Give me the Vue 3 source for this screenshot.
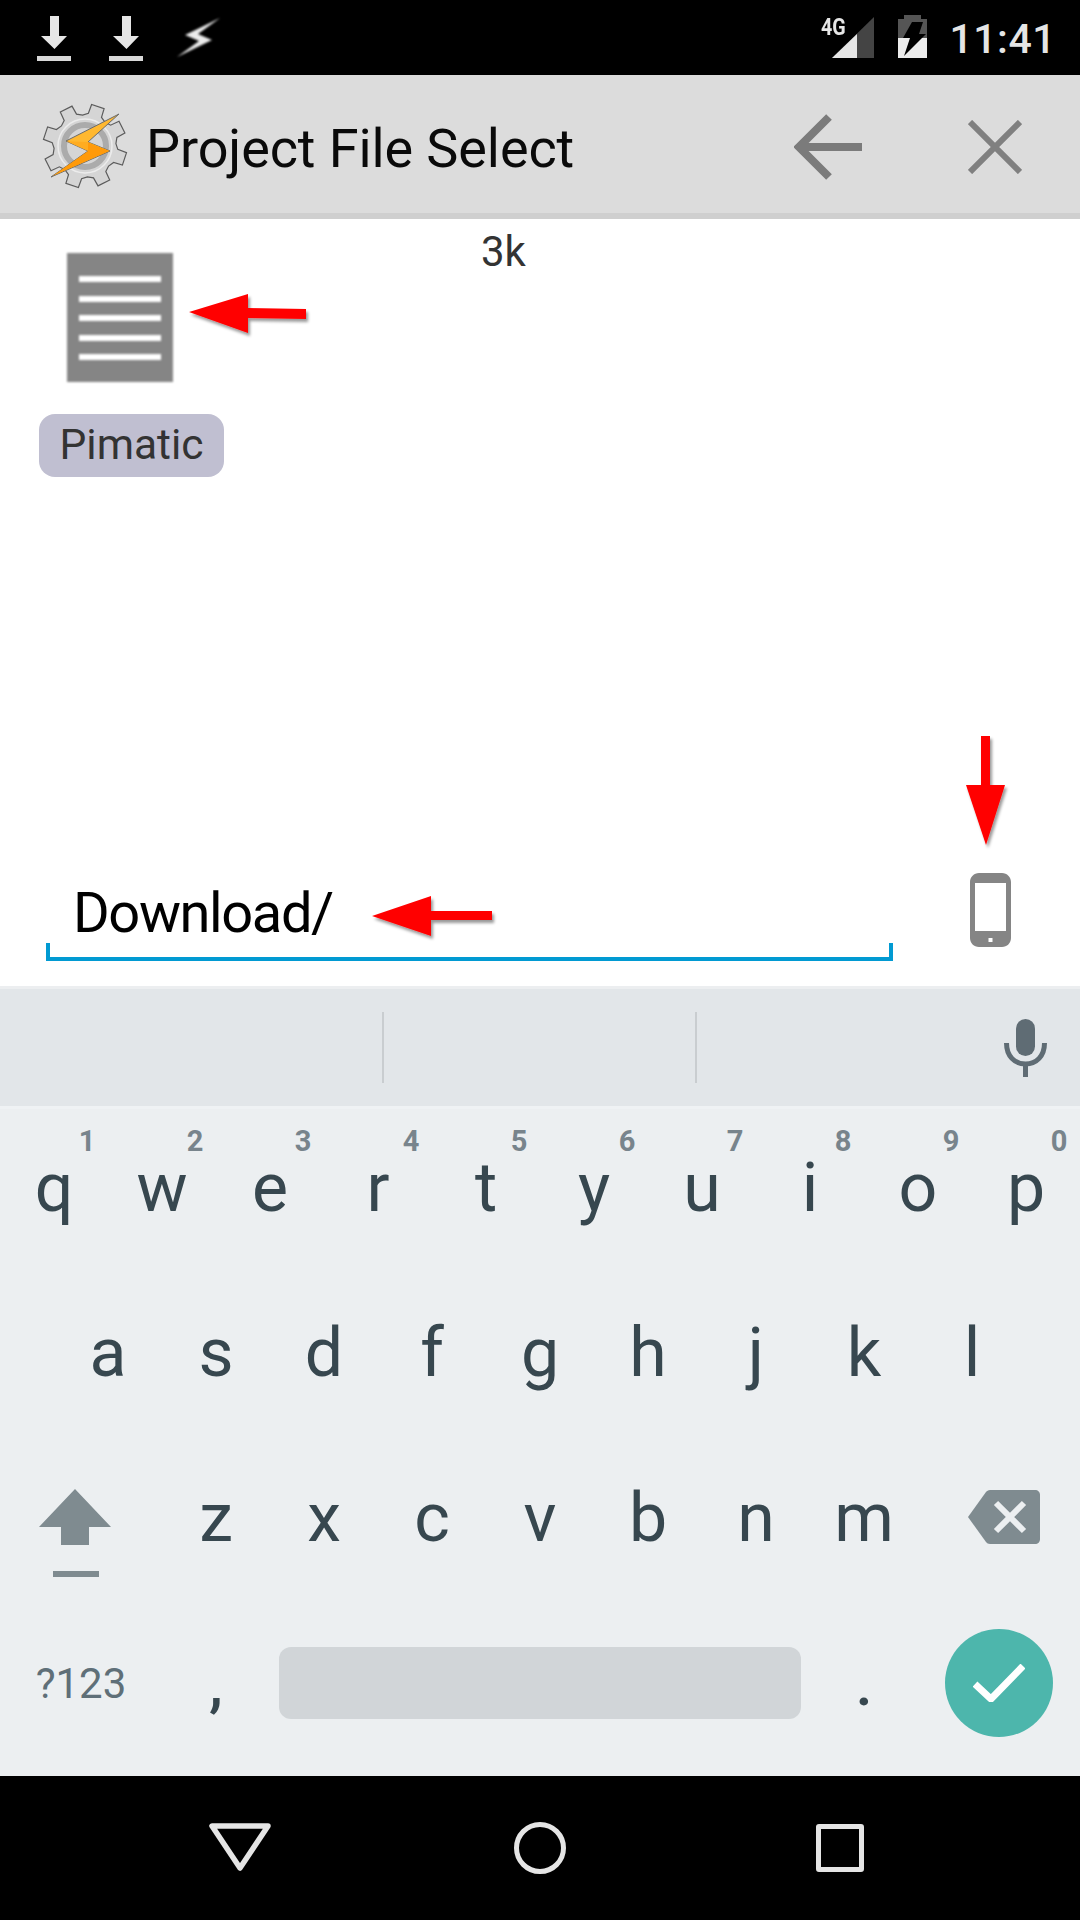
<template>
  <div class="screen">
    <!-- Status bar -->
    <div class="status-bar">
      <div class="status-left">
        <svg class="status-dl" viewBox="0 0 34 46">
          <path d="M13 0h9v20h8L17.500 33 4 20h9z" fill="#e6e6e6" />
          <rect x="0" y="40" width="34" height="5" fill="#d8d8d8" />
        </svg>
        <svg class="status-dl" viewBox="0 0 34 46">
          <path d="M13 0h9v20h8L17.500 33 4 20h9z" fill="#e6e6e6" />
          <rect x="0" y="40" width="34" height="5" fill="#d8d8d8" />
        </svg>
        <svg class="status-bolt" viewBox="0 0 44 40">
          <path d="M43 0 8 17l14 6L0 39l35-17-14-6z" fill="#ececec" />
        </svg>
      </div>
      <div class="status-right">
        <div class="signal">
          <svg class="signal-icon" viewBox="0 0 42 41">
            <path d="M42 0v41H0z" fill="#444" />
            <path d="M25 17v24H0z" fill="#e6e6e6" />
          </svg>
          <span class="signal-type">4G</span>
        </div>
        <svg class="battery" viewBox="0 0 29 43">
          <path d="M6 0h17v4h6v19H0V4h6z" fill="#555" />
          <rect x="0" y="23" width="29" height="20" fill="#ececec" />
          <path d="M14 7h11l-4 12h7L6 41l6-18H5z" fill="#000" />
        </svg>
        <span class="clock">11:41</span>
      </div>
    </div>

    <!-- Action bar -->
    <div class="action-bar">
      <svg class="app-logo" viewBox="0 0 86 86">
        <path :d="gearPath" fill="#d5d5d5" stroke="#5c5c5c" stroke-width="1.200" />
        <circle cx="43" cy="43" r="27" fill="none" stroke="#ececec" stroke-width="1.500" />
        <circle cx="43" cy="43" r="21" fill="none" stroke="#ababab" stroke-width="6" />
        <path d="M77 11 24 38l22 10L9 74l59-26-22-9z" fill="#ffb830" stroke="#6b6b6b" stroke-width="1" stroke-linejoin="round" />
        <path d="M24.500 38.200 46 39l21.500 9H46z" fill="#ffac20" />
        <path d="M46 39.500 67.500 48 10.500 73 46 48z" fill="#ff9a0a" />
      </svg>
      <span class="action-title">Project File Select</span>
      <svg class="action-back" viewBox="0 0 68 66">
        <path d="M68 33H8M35 3 5 33l30 30" fill="none" stroke="#7b7b7b" stroke-width="8" />
      </svg>
      <svg class="action-close" viewBox="0 0 54 54">
        <path d="M2 2l50 50M52 2 2 52" fill="none" stroke="#808080" stroke-width="6" />
      </svg>
    </div>

    <!-- File browser -->
    <div class="browser">
      <div class="file-row">
        <div class="file-item">
          <div class="file-icon">
            <span v-for="n in 5" :key="n" class="file-line"></span>
          </div>
          <span class="file-name">Pimatic</span>
        </div>
        <span class="file-size">3k</span>
      </div>

      <div class="path-row">
        <div class="path-input">Download/</div>
        <svg class="phone-icon" viewBox="0 0 41 74">
          <path
            fill-rule="evenodd"
            d="M9 0h23c5 0 9 4 9 9v56c0 5-4 9-9 9H9c-5 0-9-4-9-9V9c0-5 4-9 9-9zM5 10v48h31V10z"
            fill="#858585"
          />
          <rect x="18.500" y="65" width="4" height="4" fill="#fff" />
        </svg>
      </div>
    </div>

    <!-- Keyboard -->
    <div class="keyboard">
      <div class="suggestions">
        <span class="sugg-cell"></span>
        <span class="sugg-cell"></span>
        <span class="sugg-cell last">
          <svg class="mic-icon" viewBox="0 0 43 58">
            <rect x="12" y="0" width="19" height="37" rx="9.500" fill="#5f6c74" />
            <path d="M2.500 24c0 13 8 21 19 21s19-8 19-21" fill="none" stroke="#5f6c74" stroke-width="5" />
            <rect x="19" y="44" width="5" height="14" fill="#5f6c74" />
          </svg>
        </span>
      </div>
      <div class="keys">
        <div v-for="(row, i) in letterRows" :key="i" class="key-row">
          <div v-for="k in row" :key="k.c" class="key">
            {{ k.c }}
            <span v-if="k.hint" class="key-hint">{{ k.hint }}</span>
          </div>
        </div>
        <div class="key-row">
          <div class="key wide">
            <svg class="key-art" viewBox="0 0 162 165">
              <path d="M75 53l36 38H89v18H61V91H39z" fill="#7f8b90" />
              <rect x="53" y="135" width="46" height="6" fill="#7f8b90" />
            </svg>
          </div>
          <div v-for="c in 'zxcvbnm'" :key="c" class="key">{{ c }}</div>
          <div class="key wide">
            <svg class="key-art" viewBox="0 0 162 165">
              <path d="M72 54h45c3 0 5 2 5 5v44c0 3-2 5-5 5H72c-2 0-3-1-4-2L50 81l18-25c1-1 2-2 4-2z" fill="#7f8b90" />
              <path d="M78 67l28 28M106 67 78 95" stroke="#eceff1" stroke-width="6" fill="none" />
            </svg>
          </div>
        </div>
        <div class="key-row">
          <div class="key wide symbols">?123</div>
          <div class="key punct">,</div>
          <div class="key space-key"><span class="space-bar"></span></div>
          <div class="key punct">.</div>
          <div class="key wide">
            <span class="enter-btn">
              <svg class="check" viewBox="0 0 52 38">
                <path d="M2 20l16 15L50 2" fill="none" stroke="#fff" stroke-width="7" />
              </svg>
            </span>
          </div>
        </div>
      </div>
    </div>

    <!-- Nav bar -->
    <div class="nav-bar">
      <svg class="nav-back" viewBox="0 0 62 48">
        <path d="M3 3h56L31 45z" fill="none" stroke="#e5e5e5" stroke-width="5.500" stroke-linejoin="round" />
      </svg>
      <span class="nav-home"></span>
      <span class="nav-recent"></span>
    </div>

    <!-- Red arrows added on top of the screenshot -->
    <svg class="annot" viewBox="0 0 1080 1920">
      <g fill="#f00" filter="url(#arrow-shadow)">
        <path d="M189 312l59-18v14l58 1v10l-58-1v15z" />
        <path d="M372 916l59-20v15h61v9h-61v16z" />
        <path d="M981 736h9v49h15l-19 60-20-60h15z" />
      </g>
      <defs>
        <filter id="arrow-shadow" x="-20%" y="-20%" width="140%" height="140%">
          <feDropShadow dx="2" dy="3" stdDeviation="1.500" flood-color="#000" flood-opacity="0.400" />
        </filter>
      </defs>
    </svg>
  </div>
</template>

<script setup>
import { computed } from 'vue'

const toKeys = (letters, hints = '') =>
  letters.split('').map((c, i) => ({ c, hint: hints[i] }))

const letterRows = [
  toKeys('qwertyuiop', '1234567890'),
  toKeys('asdfghjkl')
]

// 8 tooth gear for the app logo
const gearPath = computed(() => {
  const pts = []
  const cx = 43
  const cy = 43
  for (let i = 0; i < 8; i++) {
    const base = (i * 45 + 18) * Math.PI / 180
    const step = Math.PI / 180
    const ring = [
      [31, -22.5],
      [33, -12],
      [42, -9],
      [42, 9],
      [33, 12]
    ]
    ring.forEach(([r, a]) => {
      const t = base + a * step
      pts.push(`${(cx + r * Math.cos(t)).toFixed(1)} ${(cy + r * Math.sin(t)).toFixed(1)}`)
    })
  }
  return 'M' + pts.join('L') + 'z'
})
</script>

<style scoped>
.screen {
  position: relative;
  width: 1080px;
  height: 1920px;
  display: flex;
  flex-direction: column;
  overflow: hidden;
  background: #fff;
  font-family: Roboto, "Liberation Sans", sans-serif;
}

/* Status bar */
.status-bar {
  height: 75px;
  background: #000;
  display: flex;
  justify-content: space-between;
  flex-shrink: 0;
}

.status-left {
  display: flex;
  padding: 16px 0 0 37px;
  align-items: flex-start;
}

.status-dl {
  width: 34px;
  height: 46px;
  margin-right: 38px;
}

.status-bolt {
  width: 44px;
  height: 40px;
  margin: 2px 0 0 -4px;
  filter: blur(1.2px);
}

.status-right {
  display: flex;
  align-items: flex-start;
  padding-right: 24px;
}

.signal {
  position: relative;
  width: 53px;
  height: 58px;
  margin-right: 24px;
}

.signal-icon {
  position: absolute;
  left: 11px;
  top: 17px;
  width: 42px;
  height: 41px;
}

.signal-type {
  position: absolute;
  left: 0;
  top: 13px;
  font-size: 24px;
  line-height: 28px;
  font-weight: 700;
  color: #e6e6e6;
  transform: scaleX(0.82);
  transform-origin: left center;
}

.battery {
  width: 29px;
  height: 43px;
  margin-top: 15px;
  margin-right: 22px;
}

.clock {
  font-size: 41px;
  line-height: 48px;
  margin-top: 15px;
  font-weight: 500;
  letter-spacing: 0.5px;
  color: #e5e5e5;
}

/* Action bar */
.action-bar {
  height: 138px;
  box-sizing: content-box;
  background: #dcdcdc;
  border-bottom: 6px solid #cfcfcf;
  display: flex;
  align-items: center;
  flex-shrink: 0;
}

.app-logo {
  width: 86px;
  height: 86px;
  margin-left: 42px;
  margin-top: 4px;
  flex-shrink: 0;
}

.action-title {
  margin-left: 18px;
  font-size: 54px;
  line-height: 70px;
  padding-top: 10px;
  color: #0a0a0a;
  width: 648px;
  letter-spacing: -0.1px;
}

.action-back {
  width: 68px;
  height: 66px;
  margin-top: 5px;
}

.action-close {
  width: 54px;
  height: 54px;
  margin-left: 106px;
  margin-top: 5px;
}

/* File browser */
.browser {
  flex: 1;
  display: flex;
  flex-direction: column;
  justify-content: space-between;
  background: #fff;
}

.file-row {
  display: flex;
  align-items: flex-start;
  padding: 0 0 0 39px;
}

.file-item {
  display: flex;
  flex-direction: column;
  align-items: flex-start;
  width: 443px;
  padding-top: 34px;
}

.file-icon {
  width: 106px;
  height: 129px;
  margin-left: 28px;
  padding: 23px 12px 0;
  box-sizing: border-box;
  background: #858585;
  display: flex;
  flex-direction: column;
  gap: 13.5px;
  filter: blur(1px);
}

.file-line {
  height: 6px;
  background: #fff;
}

.file-name {
  margin-top: 32px;
  width: 185px;
  height: 63px;
  box-sizing: border-box;
  border-radius: 16px;
  background: #c0bfd1;
  color: #333;
  font-size: 42.5px;
  line-height: 62px;
  text-align: center;
}

.file-size {
  font-size: 42px;
  line-height: 48px;
  margin-top: 9px;
  margin-left: -1px;
  color: #333;
}

.path-row {
  display: flex;
  align-items: flex-start;
  padding: 0 0 25px 46px;
}

.path-input {
  width: 847px;
  height: 88px;
  box-sizing: border-box;
  padding-left: 27px;
  font-size: 56px;
  letter-spacing: -1.4px;
  line-height: 80px;
  color: #000;
  border-bottom: 4px solid #019ad2;
  position: relative;
}

.path-input::before,
.path-input::after {
  content: '';
  position: absolute;
  bottom: 0;
  width: 4px;
  height: 14px;
  background: #019ad2;
}

.path-input::before {
  left: 0;
}

.path-input::after {
  right: 0;
}

.phone-icon {
  width: 41px;
  height: 74px;
  margin-left: 77px;
  filter: blur(0.7px);
}

/* Keyboard */
.keyboard {
  flex-shrink: 0;
  background: #eceff1;
  border-top: 3px solid #eceef0;
}

.suggestions {
  height: 117px;
  background: #e2e6e9;
  display: flex;
  align-items: center;
}

.sugg-cell {
  width: 311px;
  height: 71px;
  border-right: 2px solid #c9cdd0;
  box-sizing: content-box;
}

.sugg-cell:first-child {
  width: 382px;
}

.sugg-cell.last {
  flex: 1;
  border-right: none;
  display: flex;
  justify-content: flex-end;
  align-items: center;
  padding-right: 33px;
}

.mic-icon {
  width: 43px;
  height: 58px;
}

.keys {
  padding: 0 0 10.5px;
  border-top: 3px solid #eff2f4;
}

.key-row {
  height: 165px;
  display: flex;
  justify-content: center;
}

.key-row:first-child {
  margin-top: -3.5px;
}

.key {
  position: relative;
  width: 108px;
  display: flex;
  align-items: center;
  justify-content: center;
  font-size: 68px;
  line-height: 165px;
  color: #37474f;
}

.key.wide {
  width: 162px;
}

.key-hint {
  position: absolute;
  left: 33px;
  right: -33px;
  top: 18px;
  text-align: center;
  font-size: 29px;
  line-height: 34px;
  font-weight: 700;
  color: #78848c;
}

.key-art {
  width: 162px;
  height: 165px;
}

.symbols {
  font-size: 42px;
  color: #5f6f78;
}

.punct {
  font-weight: 500;
  font-size: 62px;
}

.space-key {
  width: 540px;
}

.space-bar {
  width: 522px;
  height: 72px;
  border-radius: 12px;
  background: #d1d5d8;
}

.enter-btn {
  width: 108px;
  height: 108px;
  border-radius: 50%;
  background: #4db6ac;
  display: flex;
  align-items: center;
  justify-content: center;
}

.check {
  width: 52px;
  height: 38px;
}

/* Nav bar */
.nav-bar {
  height: 144px;
  flex-shrink: 0;
  background: #000;
  display: flex;
  align-items: flex-start;
  padding-top: 46px;
  box-sizing: border-box;
}

.nav-back {
  width: 62px;
  height: 48px;
  margin-left: 209px;
  margin-top: 1px;
}

.nav-home {
  width: 52px;
  height: 52px;
  box-sizing: border-box;
  border: 5px solid #e5e5e5;
  border-radius: 50%;
  margin-left: 243px;
}

.nav-recent {
  width: 48px;
  height: 48px;
  box-sizing: border-box;
  border: 5px solid #e5e5e5;
  border-radius: 3px;
  margin-left: 250px;
  margin-top: 2px;
}

/* Annotations */
.annot {
  position: absolute;
  left: 0;
  top: 0;
  width: 1080px;
  height: 1920px;
  pointer-events: none;
}
</style>
